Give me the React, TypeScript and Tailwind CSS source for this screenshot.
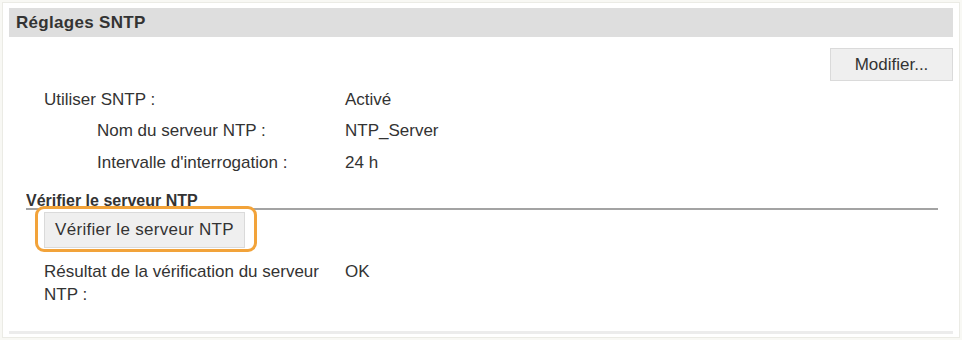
export default function App() {
  return (
    <div className="w-[962px] h-[340px] bg-[#f8f8f4] p-[2px] font-['Liberation_Sans',Arial,sans-serif] text-[#333] text-[17px]">
      <div className="h-full border border-[#ebebe5] bg-white pt-[5px] px-[6px]">
        <div className="h-[29px] bg-[#dedede] flex items-center px-[7px] font-bold text-[#333] text-[17px] tracking-[0.3px]">
          Réglages SNTP
        </div>

        <div className="flex justify-end mt-[11px]">
          <button className="h-[33px] w-[123px] border border-[#dadada] bg-[#efefef] text-[17px] text-[#333]">
            Modifier...
          </button>
        </div>

        <div className="mt-[3px] pl-[35px]">
          <div className="flex h-[31px] items-center">
            <div className="w-[301px]">Utiliser SNTP :</div>
            <div>Activé</div>
          </div>
          <div className="flex h-[32px] items-center">
            <div className="w-[248px] pl-[53px] box-content">Nom du serveur NTP :</div>
            <div>NTP_Server</div>
          </div>
          <div className="flex h-[32px] items-center">
            <div className="w-[248px] pl-[53px] box-content">Intervalle d'interrogation :</div>
            <div>24 h</div>
          </div>
        </div>

        {/* section heading, partly covered by the highlight box */}
        <div className="ml-[17px] mr-[15px] mt-[12px] h-[19px] border-b-2 border-[#a3a3a3] font-bold text-[16px] leading-[19px] overflow-hidden">
          Vérifier le serveur NTP
        </div>

        <div className="relative z-10 -mt-[4px] ml-[26px] w-[222px] h-[46px] rounded-[9px] border-[3px] border-[#f2a33a] bg-white px-[6px] pt-[3px]">
          <button className="h-[36px] w-[201px] border border-[#dadada] bg-[#efefef] text-[17px] tracking-[0.3px] text-[#333]">
            Vérifier le serveur NTP
          </button>
        </div>

        <div className="flex pl-[35px] mt-[8px] leading-[23px]">
          <div className="w-[301px] pr-[10px]">Résultat de la vérification du serveur NTP :</div>
          <div>OK</div>
        </div>

        <div className="mt-[25px] h-[3px] bg-[#ececec]" />
      </div>
    </div>
  );
}
